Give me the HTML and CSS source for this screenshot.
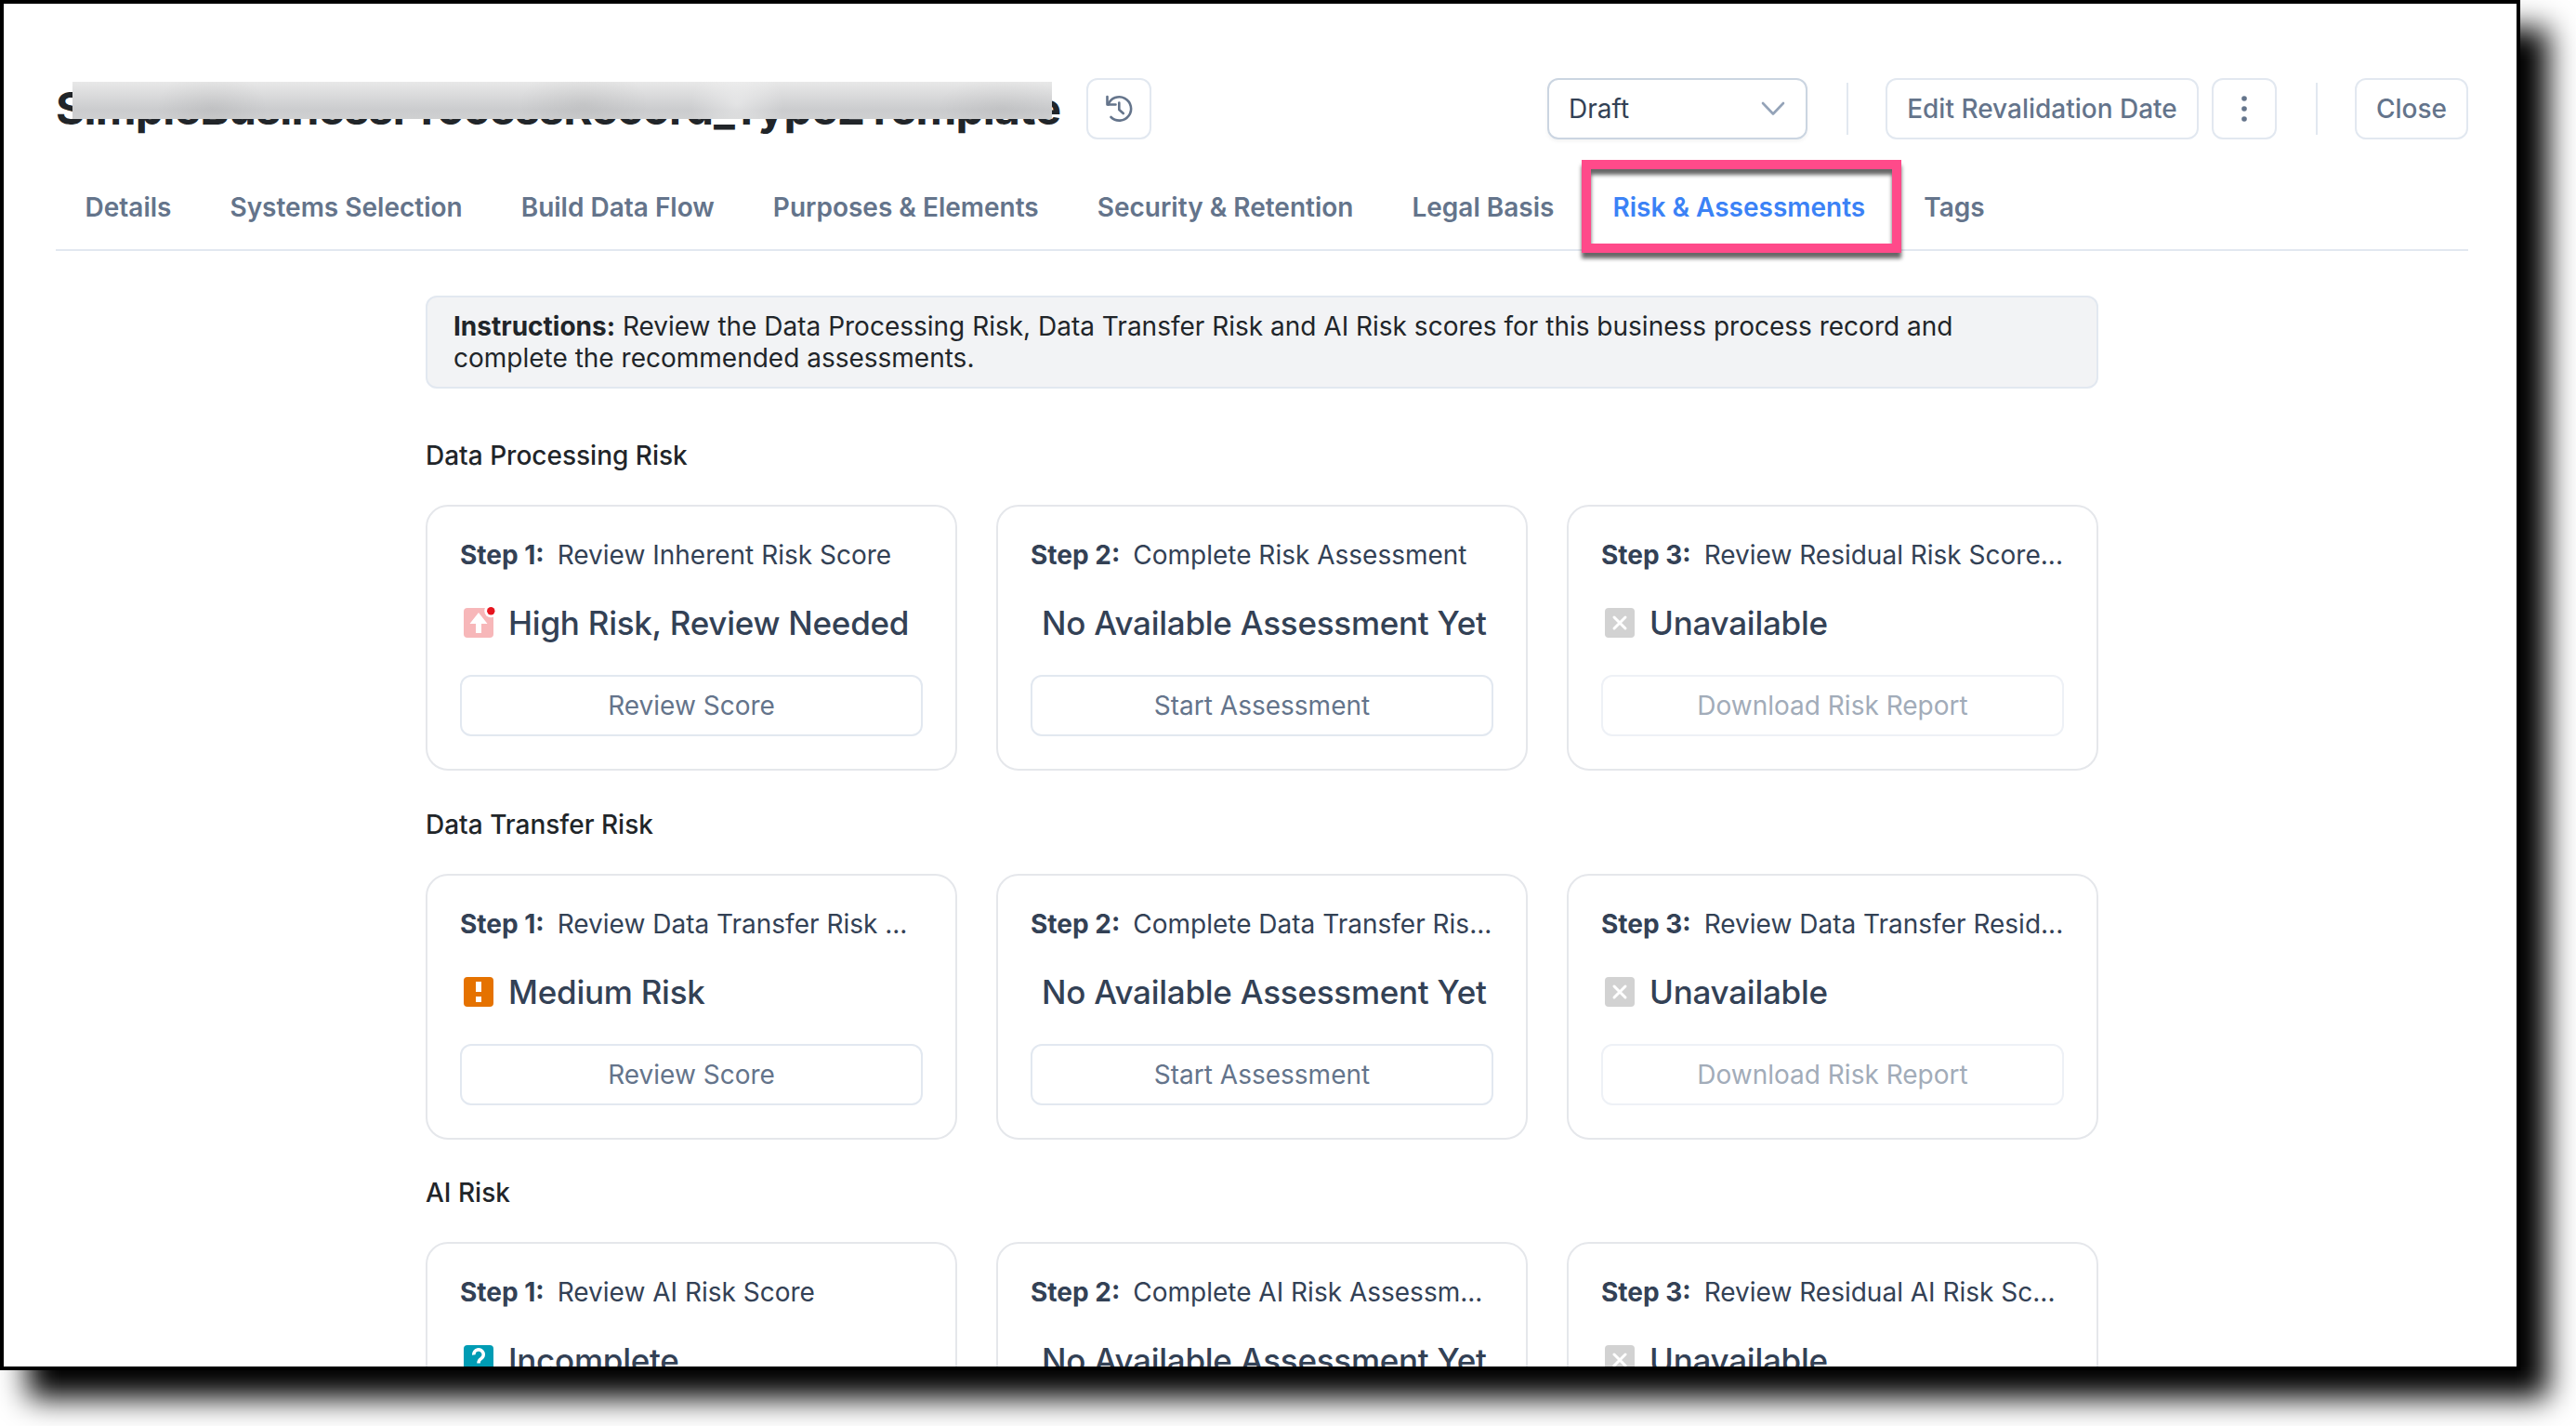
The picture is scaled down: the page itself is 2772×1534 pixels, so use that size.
FILE: index.html
```html
<!DOCTYPE html>
<html lang="en">
  <head>
    <meta charset="UTF-8" />
    <meta name="viewport" content="width=device-width, initial-scale=1.0" />
    <title>Risk &amp; Assessments</title>
    <link rel="stylesheet" href="styles.css">
  </head>
  <body>
    <div class="window">
      <header class="header">
        <div class="title-wrap">
          <h1 class="title">SimpleBusinessProcessRecord_Type2Template</h1>
          <div class="redaction"></div>
        </div>
        <button class="btn icon-btn history-btn">
          <svg width="32" height="32" viewBox="0 0 32 32" fill="none" stroke="#64748b" stroke-width="2.6" stroke-linecap="round" stroke-linejoin="round">
            <path d="M3.500 3v8.500h9" />
            <path d="M4.500 11.500A12.700 12.700 0 1 1 7.500 25" />
            <path d="M16.300 9.500v7.500l4.500 4" />
          </svg>
        </button>
        <div class="actions">
          <div class="select">
            <span>Draft</span>
            <svg width="26" height="16" viewBox="0 0 26 16" fill="none" stroke="#94a3b8" stroke-width="2.6" stroke-linecap="round" stroke-linejoin="round">
              <path d="M2 2l11 11.5L24 2" />
            </svg>
          </div>
          <div class="divider"></div>
          <button class="btn edit-btn">Edit Revalidation Date</button>
          <button class="btn icon-btn more-btn">
            <svg width="6" height="28" viewBox="0 0 6 28" fill="#64748b">
              <circle cx="3" cy="3" r="2.8" />
              <circle cx="3" cy="14" r="2.8" />
              <circle cx="3" cy="25" r="2.8" />
            </svg>
          </button>
          <div class="divider"></div>
          <button class="btn close-btn">Close</button>
        </div>
      </header>

      <nav class="tabs">
        <a class="tab">Details</a>
        <a class="tab">Systems Selection</a>
        <a class="tab">Build Data Flow</a>
        <a class="tab">Purposes &amp; Elements</a>
        <a class="tab">Security &amp; Retention</a>
        <a class="tab">Legal Basis</a>
        <a class="tab active">Risk &amp; Assessments<span class="highlight"></span></a>
        <a class="tab">Tags</a>
      </nav>

      <main class="content">
        <div class="instructions">
          <b>Instructions:</b> Review the Data Processing Risk, Data Transfer Risk and AI Risk scores for this business process record and complete the recommended assessments.
        </div>

        <section class="risk">
          <h2 class="risk-title">Data Processing Risk</h2>
          <div class="cards">
            <div class="card">
              <div class="step"><b>Step 1:</b>Review Inherent Risk Score</div>
              <div class="status">
                <svg class="status-icon" width="36" height="36" viewBox="0 0 36 36">
                  <rect x="0" y="2" width="32" height="32" rx="4" fill="#f7b7b9" />
                  <path d="M16 7l9.500 12H19v10h-6V19H6.500z" fill="#fff" />
                  <circle cx="29.3" cy="5.3" r="7" fill="#fff" />
                  <circle cx="29.3" cy="5.3" r="4.2" fill="#e6141e" />
                </svg>
                <span>High Risk, Review Needed</span>
              </div>
              <button class="btn card-btn">Review Score</button>
            </div>
            <div class="card">
              <div class="step"><b>Step 2:</b>Complete Risk Assessment</div>
              <div class="status no-icon"><span>No Available Assessment Yet</span></div>
              <button class="btn card-btn">Start Assessment</button>
            </div>
            <div class="card">
              <div class="step"><b>Step 3:</b>Review Residual Risk Score...</div>
              <div class="status">
                <svg class="status-icon" width="36" height="36" viewBox="0 0 36 36">
                  <rect x="0" y="2" width="32" height="32" rx="4" fill="#d2d2d2" />
                  <path d="M10 12l12 12M22 12L10 24" stroke="#fff" stroke-width="3" stroke-linecap="round" />
                </svg>
                <span>Unavailable</span>
              </div>
              <button class="btn card-btn disabled">Download Risk Report</button>
            </div>
          </div>
        </section>

        <section class="risk">
          <h2 class="risk-title">Data Transfer Risk</h2>
          <div class="cards">
            <div class="card">
              <div class="step"><b>Step 1:</b>Review Data Transfer Risk ...</div>
              <div class="status">
                <svg class="status-icon" width="36" height="36" viewBox="0 0 36 36">
                  <rect x="0" y="2" width="32" height="32" rx="4" fill="#e57200" />
                  <path d="M13 7h6v11h-6zM13 23h6v6h-6z" fill="#fff" />
                </svg>
                <span>Medium Risk</span>
              </div>
              <button class="btn card-btn">Review Score</button>
            </div>
            <div class="card">
              <div class="step"><b>Step 2:</b>Complete Data Transfer Ris...</div>
              <div class="status no-icon"><span>No Available Assessment Yet</span></div>
              <button class="btn card-btn">Start Assessment</button>
            </div>
            <div class="card">
              <div class="step"><b>Step 3:</b>Review Data Transfer Resid...</div>
              <div class="status">
                <svg class="status-icon" width="36" height="36" viewBox="0 0 36 36">
                  <rect x="0" y="2" width="32" height="32" rx="4" fill="#d2d2d2" />
                  <path d="M10 12l12 12M22 12L10 24" stroke="#fff" stroke-width="3" stroke-linecap="round" />
                </svg>
                <span>Unavailable</span>
              </div>
              <button class="btn card-btn disabled">Download Risk Report</button>
            </div>
          </div>
        </section>

        <section class="risk">
          <h2 class="risk-title">AI Risk</h2>
          <div class="cards">
            <div class="card">
              <div class="step"><b>Step 1:</b>Review AI Risk Score</div>
              <div class="status">
                <svg class="status-icon" width="36" height="36" viewBox="0 0 36 36">
                  <rect x="0" y="2" width="32" height="32" rx="4" fill="#009cb4" />
                  <path d="M10.800 12.500a5.200 5.200 0 1 1 8 4q-2.800 1.500-2.800 5" fill="none" stroke="#fff" stroke-width="3.6" />
                  <path d="M14 25h4v4h-4z" fill="#fff" />
                </svg>
                <span>Incomplete</span>
              </div>
              <button class="btn card-btn">Review Score</button>
            </div>
            <div class="card">
              <div class="step"><b>Step 2:</b>Complete AI Risk Assessm...</div>
              <div class="status no-icon"><span>No Available Assessment Yet</span></div>
              <button class="btn card-btn">Start Assessment</button>
            </div>
            <div class="card">
              <div class="step"><b>Step 3:</b>Review Residual AI Risk Sc...</div>
              <div class="status">
                <svg class="status-icon" width="36" height="36" viewBox="0 0 36 36">
                  <rect x="0" y="2" width="32" height="32" rx="4" fill="#d2d2d2" />
                  <path d="M10 12l12 12M22 12L10 24" stroke="#fff" stroke-width="3" stroke-linecap="round" />
                </svg>
                <span>Unavailable</span>
              </div>
              <button class="btn card-btn disabled">Download Risk Report</button>
            </div>
          </div>
        </section>
      </main>
    </div>
  </body>
</html>
```
FILE: styles.css
```css
* {
  box-sizing: border-box;
}
body {
  margin: 0;
  height: 1534px;
  background: #fff;
  font-family: Inter, "Liberation Sans", sans-serif;
  font-size: 28px;
  color: #212529;
  overflow: hidden;
}
.window {
  width: 2712px;
  height: 1474px;
  border: 4px solid #000;
  background: #fff;
  overflow: hidden;
  box-shadow: 30px 30px 30px #000;
}

/* header */
.header {
  display: flex;
  align-items: center;
  height: 66px;
  margin: 80px 52px 0 56px;
}
.title-wrap {
  position: relative;
  width: 1082px;
}
.title {
  margin: 0;
  font-size: 48px;
  font-weight: 700;
  line-height: 66px;
  letter-spacing: -0.82px;
  white-space: nowrap;
}
.redaction {
  position: absolute;
  left: 18px;
  top: 4px;
  width: 1054px;
  height: 40px;
  background:
    radial-gradient(ellipse 60px 40px at 150px 28px, rgba(0, 0, 0, 0.06), transparent),
    radial-gradient(ellipse 70px 40px at 550px 24px, rgba(0, 0, 0, 0.06), transparent),
    radial-gradient(ellipse 50px 44px at 715px 24px, rgba(255, 255, 255, 0.4), transparent),
    radial-gradient(ellipse 70px 34px at 1000px 28px, rgba(0, 0, 0, 0.05), transparent),
    linear-gradient(#e8e8e8, #cbccce 75%, #cfd0d1);
}
.btn {
  display: flex;
  align-items: center;
  justify-content: center;
  height: 66px;
  padding: 0;
  border: 2px solid #e2e8f0;
  border-radius: 12px;
  background: #fff;
  color: #64748b;
  font-family: inherit;
  font-size: 28px;
  font-weight: 500;
  white-space: nowrap;
}
.icon-btn {
  width: 70px;
}
.history-btn {
  margin-left: 27px;
}
.actions {
  display: flex;
  align-items: center;
  margin-left: auto;
}
.select {
  display: flex;
  align-items: center;
  justify-content: space-between;
  width: 280px;
  height: 66px;
  padding: 0 22px 0 21px;
  border: 2px solid #cbd5e1;
  border-radius: 12px;
  box-shadow: 0 2px 4px rgba(18, 18, 23, 0.05);
  color: #334155;
}
.divider {
  width: 2px;
  height: 56px;
  margin: 0 40px 0 42px;
  background: #e2e8f0;
}
.edit-btn {
  width: 337px;
}
.more-btn {
  margin-left: 14px;
}
.close-btn {
  width: 122px;
}

/* tabs */
.tabs {
  display: flex;
  height: 120px;
  margin: 0 52px 0 56px;
  padding-left: 0.5px;
  border-bottom: 2px solid #e2e8f0;
}
.tab {
  position: relative;
  padding: 56px 32px 0 31px;
  color: #64748b;
  font-weight: 600;
  line-height: 34px;
  white-space: nowrap;
}
.tab.active {
  color: #3b82f6;
}
.highlight {
  position: absolute;
  left: -2px;
  top: 22px;
  width: 344px;
  height: 100px;
  border: 10px solid #ff4a8a;
  filter: drop-shadow(0 6px 2px rgba(0, 0, 0, 0.6));
}

/* content */
.content {
  width: 1800px;
  margin: 48px 0 0 454px;
}
.instructions {
  height: 100px;
  padding: 14px 28px;
  border: 2px solid #e2e8f0;
  border-radius: 12px;
  background: #f2f3f5;
  line-height: 34px;
}
.risk {
  height: 396.5px;
}
.risk-title {
  height: 125px;
  margin: 0;
  padding-top: 55px;
  font-size: 28px;
  font-weight: 500;
  line-height: 34px;
}
.cards {
  display: flex;
  gap: 42px;
}
.card {
  width: 572px;
  height: 286px;
  padding: 34px 35px 0;
  border: 2px solid #e5e7eb;
  border-radius: 24px;
  color: #334155;
}
.step {
  line-height: 36px;
  white-space: nowrap;
}
.step b {
  margin-right: 14px;
}
.status {
  display: flex;
  align-items: center;
  gap: 12px;
  height: 40px;
  margin: 35px 0 36px;
  padding-left: 4px;
  font-size: 35px;
  font-weight: 500;
  letter-spacing: -0.25px;
  white-space: nowrap;
}
.no-icon {
  padding-left: 12px;
}
.card-btn {
  width: 498px;
  font-weight: 400;
}
.card-btn.disabled {
  border-color: #eef1f6;
  color: #a2acb9;
}
```
